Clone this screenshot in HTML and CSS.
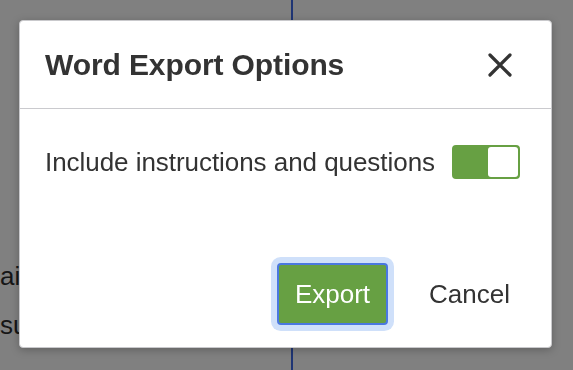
FILE: index.html
```html
<!DOCTYPE html>
<html lang="en">
<head>
  <meta charset="UTF-8">
  <title>Word Export Options</title>
  <link rel="stylesheet" href="styles.css">
</head>
<body>
  <div class="page">
    <div class="page-text">
      <p class="line-a">ain</p>
      <p class="line-b">sum</p>
    </div>
    <div class="divider"></div>
  </div>

  <div class="overlay">
    <div class="dialog">
      <div class="dialog-header">
        <h2>Word Export Options</h2>
        <button class="close-btn" aria-label="Close">
          <svg width="24" height="24" viewBox="0 0 24 24">
            <path d="M2 2 L22 22 M22 2 L2 22" stroke="#333" stroke-width="3.2" stroke-linecap="round" fill="none"/>
          </svg>
        </button>
      </div>
      <div class="dialog-body">
        <label class="option">
          <span>Include instructions and questions</span>
          <span class="toggle"><span class="knob"></span></span>
        </label>
      </div>
      <div class="dialog-footer">
        <button class="export-btn">Export</button>
        <button class="cancel-btn">Cancel</button>
      </div>
    </div>
  </div>
</body>
</html>
```

FILE: styles.css
```css
body {
  margin: 0;
  font-family: "Liberation Sans", Arial, sans-serif;
  background: #808080;
  width: 573px;
  height: 370px;
  overflow: hidden;
}
.page {
  display: flex;
  height: 370px;
}
.page-text {
  width: 291px;
  padding-top: 252px;
}
.page-text p {
  margin: 0;
  font-size: 26px;
  line-height: 49px;
  color: #161616;
}
.divider {
  width: 2px;
  background: #1f3574;
}
.overlay {
  position: fixed;
  top: 0;
  left: 0;
  right: 0;
  bottom: 0;
  padding: 20px 0 0 19px;
}
.dialog {
  width: 533px;
  height: 328px;
  box-sizing: border-box;
  background: #fff;
  border: 1px solid #c9c9cc;
  border-radius: 4px;
  box-shadow: 0 2px 8px rgba(0,0,0,0.25);
  display: flex;
  flex-direction: column;
}
.dialog-header {
  height: 88px;
  box-sizing: border-box;
  border-bottom: 1px solid #cacace;
  display: flex;
  align-items: center;
  justify-content: space-between;
  padding: 0 39px 0 25px;
}
.dialog-header h2 {
  margin: 0;
  font-size: 30px;
  font-weight: bold;
  color: #333;
  letter-spacing: -0.1px;
}
.close-btn {
  border: none;
  background: none;
  padding: 0;
  width: 24px;
  height: 24px;
  display: flex;
  cursor: pointer;
}
.dialog-body {
  flex: 1;
  padding: 36px 25px 0;
}
.option {
  display: flex;
  align-items: center;
  gap: 17px;
  font-size: 26px;
  color: #333;
  letter-spacing: -0.05px;
}
.toggle {
  width: 68px;
  height: 34px;
  box-sizing: border-box;
  border: 2px solid #67a043;
  border-radius: 4px;
  background: #67a043;
  display: flex;
  justify-content: flex-end;
}
.knob {
  width: 30px;
  height: 30px;
  background: #fff;
  border-radius: 3px;
}
.dialog-footer {
  display: flex;
  justify-content: flex-end;
  align-items: center;
  gap: 23px;
  padding: 0 23px 22px 0;
}
.dialog-footer button {
  font-family: inherit;
  font-size: 26px;
  height: 62px;
  box-sizing: border-box;
  padding: 0 16px;
  cursor: pointer;
}
.export-btn {
  background: #67a043;
  color: #fff;
  border: 2px solid #4a78e0;
  border-radius: 4px;
  box-shadow: 0 0 0 6px #cfe0fa;
}
.cancel-btn {
  background: none;
  border: 2px solid transparent;
  color: #333;
}
```
